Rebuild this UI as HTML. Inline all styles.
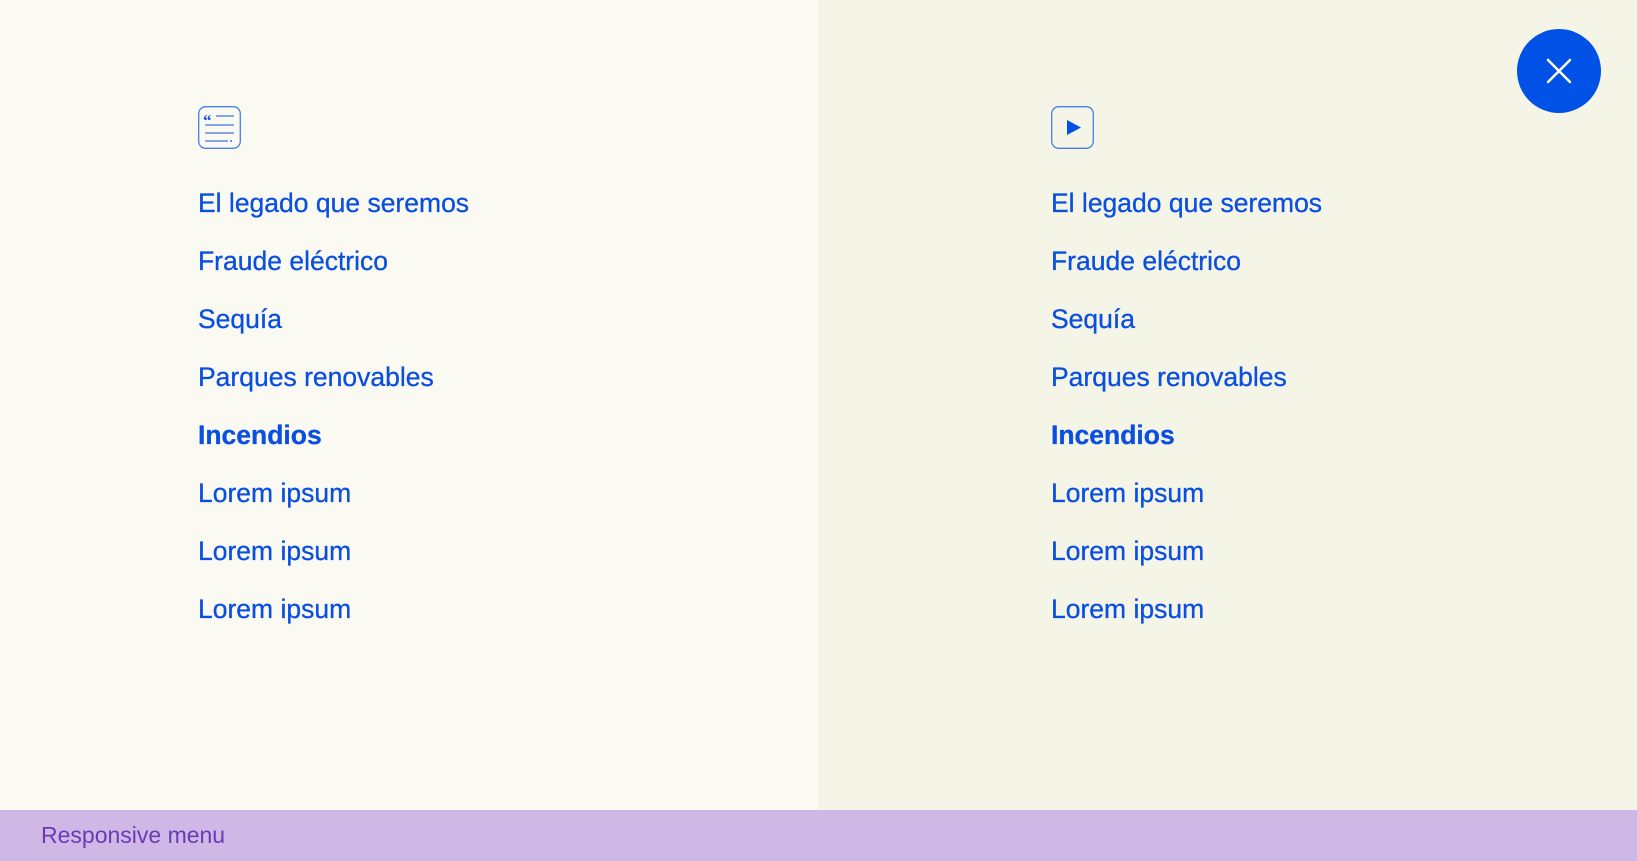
<!DOCTYPE html>
<html><head><meta charset="utf-8"><style>
*{margin:0;padding:0;box-sizing:border-box}
body{width:1637px;height:861px;overflow:hidden;font-family:"Liberation Sans",sans-serif;position:relative;background:#fafaf2}
.l{position:absolute;left:0;top:0;width:818px;height:810px;background:#fafaf2}
.r{position:absolute;left:818px;top:0;width:819px;height:810px;background:#f4f4e7}
.col{position:absolute;top:106px}
.col ul{list-style:none}
.col li{height:58px;line-height:58px;font-size:26.5px;color:#0a4fe0;-webkit-text-stroke:0.3px #0a4fe0}
.col li.b{font-weight:bold}
.close{position:absolute;left:1517px;top:29px;width:84px;height:84px;border-radius:50%;background:#0052e6}
.foot{position:absolute;left:0;top:810px;width:1637px;height:51px;background:#cfb8e6;color:#6a3bb5;font-size:23px;padding-left:41px;line-height:50px}
</style></head><body>
<div class="l"></div><div class="r"></div>
<div class="col" style="left:198px">
<svg width="43" height="43" viewBox="0 0 43 43"><rect x="0.7" y="0.7" width="41.6" height="41.6" rx="7" fill="none" stroke="#4a7fe8" stroke-width="1.3"/><text x="5" y="20" font-size="17" font-weight="bold" fill="#0a4fe0" font-family="Liberation Serif">“</text><path d="M18 10H36M7 19H36M7 27H36M7 35H30" stroke="#3c72e6" stroke-width="1.3"/><circle cx="33" cy="35" r="1" fill="#3c72e6"/></svg>
<ul style="margin-top:20px"><li>El legado que seremos</li><li>Fraude eléctrico</li><li>Sequía</li><li>Parques renovables</li><li class="b">Incendios</li><li>Lorem ipsum</li><li>Lorem ipsum</li><li>Lorem ipsum</li></ul>
</div>
<div class="col" style="left:1051px">
<svg width="43" height="43" viewBox="0 0 43 43"><rect x="0.7" y="0.7" width="41.6" height="41.6" rx="7" fill="none" stroke="#4a7fe8" stroke-width="1.3"/><path d="M16 14L30 21.5L16 29Z" fill="#0052e6"/></svg>
<ul style="margin-top:20px"><li>El legado que seremos</li><li>Fraude eléctrico</li><li>Sequía</li><li>Parques renovables</li><li class="b">Incendios</li><li>Lorem ipsum</li><li>Lorem ipsum</li><li>Lorem ipsum</li></ul>
</div>
<div class="close"><svg width="84" height="84" viewBox="0 0 84 84"><path d="M31 31L53 53M53 31L31 53" stroke="#fff" stroke-width="2.5" stroke-linecap="round"/></svg></div>
<div class="foot">Responsive menu</div>
</body></html>
